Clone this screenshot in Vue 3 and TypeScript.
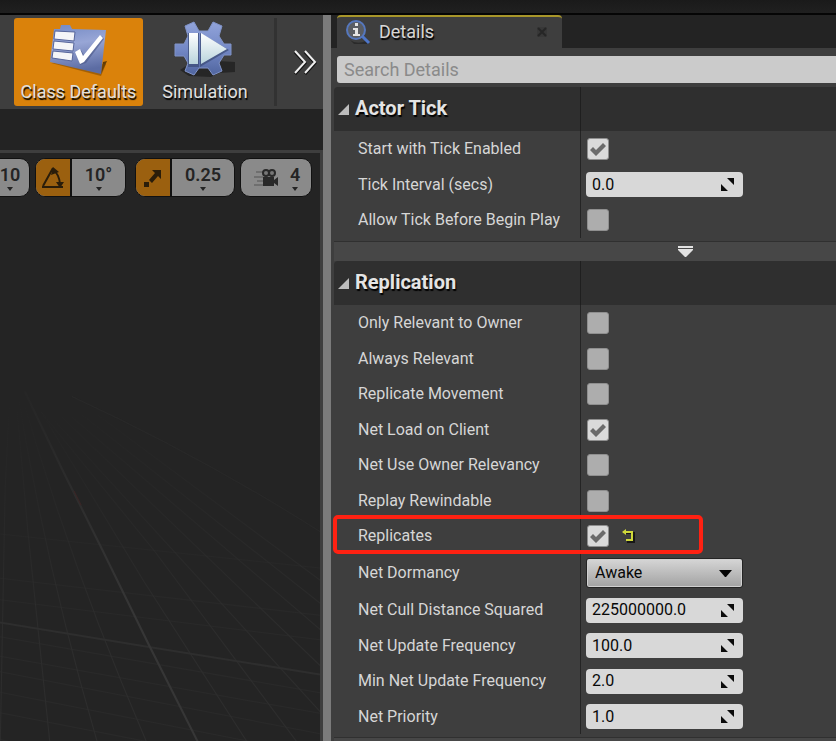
<script setup lang="ts">
import { reactive } from 'vue'

interface Property {
  id: string
  label: string
  kind: 'check' | 'number' | 'select'
  value: boolean | string
  marked?: boolean
}

interface Section {
  title: string
  properties: Property[]
}

const check = (id: string, label: string, value = false, marked = false): Property => ({ id, label, kind: 'check', value, marked })
const num = (id: string, label: string, value: string): Property => ({ id, label, kind: 'number', value })

const sections = reactive<Section[]>([
  {
    title: 'Actor Tick',
    properties: [
      check('start-tick', 'Start with Tick Enabled', true),
      num('tick-interval', 'Tick Interval (secs)', '0.0'),
      check('tick-before-play', 'Allow Tick Before Begin Play'),
    ],
  },
  {
    title: 'Replication',
    properties: [
      check('only-owner', 'Only Relevant to Owner'),
      check('always-relevant', 'Always Relevant'),
      check('replicate-movement', 'Replicate Movement'),
      check('net-load', 'Net Load on Client', true),
      check('owner-relevancy', 'Net Use Owner Relevancy'),
      check('replay-rewindable', 'Replay Rewindable'),
      check('replicates', 'Replicates', true, true),
      { id: 'net-dormancy', label: 'Net Dormancy', kind: 'select', value: 'Awake' },
      num('cull-distance', 'Net Cull Distance Squared', '225000000.0'),
      num('update-frequency', 'Net Update Frequency', '100.0'),
      num('min-update-frequency', 'Min Net Update Frequency', '2.0'),
      num('net-priority', 'Net Priority', '1.0'),
    ],
  },
])

const rays = [
  'M9 400 L5 480 L0 741', 'M15 385 L27 520 L50 741', 'M17 385 Q45 560 99 741', 'M20 385 Q70 560 149 741',
  'M40 405 L140 570 L250 741', 'M40 405 L150 540 L300 741', 'M50 410 L320 706', 'M60 410 L320 660',
  'M70 410 L320 624', 'M80 408 L320 598', 'M95 408 L320 575',
]
const cross = [
  'M0 524 L320 558', 'M0 567 L320 604', 'M0 588 L320 628',
  'M0 624 L320 680', 'M0 643 L320 700', 'M0 658 L320 720', 'M0 678 L320 741', 'M0 698 L220 741', 'M0 724 L75 741',
]
</script>

<template>
  <div class="editor">
    <div class="titlebar"></div>
    <div class="workspace">
      <main class="left">
        <div class="toolbar">
          <button class="tool active" type="button">
            <svg width="64" height="60" viewBox="0 0 64 60" aria-hidden="true">
              <defs>
                <linearGradient id="board" x1="0" y1="0" x2="0.2" y2="1">
                  <stop offset="0" stop-color="#7289c4" /><stop offset="0.45" stop-color="#98a6d6" /><stop offset="1" stop-color="#5c6ca3" />
                </linearGradient>
              </defs>
              <path d="M54 56 L60 43 L56 44 Z" fill="#4a2f06" opacity=".85" />
              <path d="M4 45 L54 58 L59 46 L50 46 Z" fill="#744604" opacity=".55" />
              <path d="M7 11 L13 11 L14 7 L23 7 L25 11 L59 12 L54 56 L3 44 Z" fill="url(#board)" />
              <path d="M8 13 L28 14 L27 23 L7 21 Z M7 23 L27 25 L26 33 L6 31 Z M6 33 L26 35 L25 43 L5 40 Z" fill="#f4f5f8" stroke="#56659a" stroke-width="1" />
              <path d="M30 34 L34 32 L38 39 L55 18 L57 21 L39 45 L33 47 Z" fill="#4a5787" opacity=".6" />
              <path d="M28 34 L33 31 L36 38 L53 17 L56 20 L37 44 L33 46 Z" fill="#fff" />
            </svg>
            <span>Class Defaults</span>
          </button>
          <button class="tool" type="button">
            <svg width="64" height="60" viewBox="0 0 64 60" aria-hidden="true">
              <defs>
                <linearGradient id="gear" x1="0" y1="0" x2="0" y2="1">
                  <stop offset="0" stop-color="#92a4da" /><stop offset="0.5" stop-color="#7489c6" /><stop offset="1" stop-color="#50659f" />
                </linearGradient>
                <linearGradient id="play" x1="0" y1="0" x2="0" y2="1">
                  <stop offset="0" stop-color="#fff" /><stop offset="1" stop-color="#b9d4dc" />
                </linearGradient>
              </defs>
              <path d="M7 52 L16 46 L45 43 L62 44 L62 54 L46 55 L38 59 L16 58 Z" fill="#202020" opacity=".8" />
              <path d="M21 4 L12 8 L15 18 L11 26 L2 26 L2 38 L11 38 L15 45 L12 53 L21 57 L26 50 L35 50 L40 57 L49 53 L46 45 L51 37 L58 37 L58 26 L51 26 L46 18 L49 8 L40 4 L35 13 L26 13 Z" fill="url(#gear)" stroke="#8093c7" stroke-width="1" stroke-linejoin="round" />
              <path d="M15 15 H26 V49 H15 Z M27 15 L56 32 L27 49 Z" fill="#40507d" opacity=".8" />
              <path d="M16 15 H25 V46 H16 Z M28 15 L54 31 L28 46 Z" fill="url(#play)" />
            </svg>
            <span>Simulation</span>
          </button>
          <button class="more" type="button" aria-label="More tools">
            <svg width="26" height="26" viewBox="0 0 26 26" aria-hidden="true">
              <path d="M3 3 L13 14 L3 25 M13 3 L23 14 L13 25" fill="none" stroke="#111" stroke-width="3" />
              <path d="M3 2 L13 13 L3 24 M13 2 L23 13 L13 24" fill="none" stroke="#eee" stroke-width="2" />
            </svg>
          </button>
        </div>
        <div class="gap-bar"></div>
        <div class="viewport">
          <svg class="floor" viewBox="0 153 320 588" preserveAspectRatio="xMinYMin slice" aria-hidden="true">
            <defs>
              <linearGradient id="fade" gradientUnits="userSpaceOnUse" x1="0" y1="390" x2="0" y2="640">
                <stop offset="0" stop-color="#2d2d2d" stop-opacity="0" /><stop offset="1" stop-color="#2d2d2d" />
              </linearGradient>
              <linearGradient id="axis" gradientUnits="userSpaceOnUse" x1="0" y1="390" x2="0" y2="600">
                <stop offset="0" stop-color="#363636" stop-opacity="0.1" /><stop offset="1" stop-color="#363636" />
              </linearGradient>
            </defs>
            <g fill="none" stroke="url(#fade)" stroke-width="1">
              <path v-for="d in rays" :key="d" :d="d" />
              <path v-for="d in cross" :key="d" :d="d" opacity=".6" />
            </g>
            <path d="M0 610 L145 634 L320 662" fill="none" stroke="#2e2e2e" stroke-width="2" />
            <path d="M70 390 Q200 450 320 527" fill="none" stroke="#292929" stroke-width="1" />
            <path d="M24 385 L62 464 L98 536 L145 632 L200 741" fill="none" stroke="url(#axis)" stroke-width="2" />
            <path d="M72 482 L79 496" stroke="#3b2626" stroke-width="1" />
          </svg>
          <div class="snap-bar">
            <div class="snap">
              <button class="value narrow" type="button"><span>10</span><i></i></button>
            </div>
            <div class="snap">
              <button class="toggle" type="button" aria-label="Rotation snapping">
                <svg width="24" height="24" viewBox="0 0 24 24" aria-hidden="true">
                  <path d="M1 21 H22 M2 20 L12 2 M13 5 Q18 8 19 18" fill="none" stroke="#2a1d0a" stroke-width="2" />
                  <path d="M10 9 L12 1 L18 6 Z M15 16 L23 16 L19 22 Z" fill="#2a1d0a" />
                </svg>
              </button>
              <button class="value" type="button"><span>10°</span><i></i></button>
            </div>
            <div class="snap spaced">
              <button class="toggle" type="button" aria-label="Scale snapping">
                <svg width="20" height="20" viewBox="0 0 20 20" aria-hidden="true">
                  <path d="M1 14 h5 v5 h-5 Z M9 2 H18 V11 L15 8 L9 15 L6 12 L12 5 Z" fill="#2a1d0a" />
                </svg>
              </button>
              <button class="value wide" type="button"><span>0.25</span><i></i></button>
            </div>
            <div class="snap">
              <button class="camera" type="button" aria-label="Camera speed 4">
                <svg width="26" height="20" viewBox="0 0 26 20" aria-hidden="true">
                  <path d="M3 4 H12 M1 9 H10 M4 13 H10 M1 17 H12" stroke="#555" stroke-width="1" />
                  <path d="M10 9 H21 V12 L25 9 V18 L21 15 V18 H10 Z" fill="#292929" />
                  <circle cx="13" cy="5" r="3" fill="#777" stroke="#292929" stroke-width="2" />
                  <circle cx="19" cy="5" r="3" fill="#777" stroke="#292929" stroke-width="2" />
                </svg>
                <span class="speed"><span>4</span><i></i></span>
              </button>
            </div>
          </div>
        </div>
      </main>
      <div class="splitter"></div>
      <aside class="details">
        <div class="tabs">
          <div class="tab">
            <svg width="26" height="26" viewBox="0 0 26 26" aria-hidden="true">
              <path d="M5 21 Q12 26 21 22 L24 25 H9 Z" fill="#222" opacity=".7" />
              <path d="M17 17 L24 24" stroke="#4e76c9" stroke-width="3" />
              <circle cx="11" cy="11" r="9" fill="#5a5d63" stroke="#5577bd" stroke-width="2" />
              <path d="M10 4 H13 V7 H10 Z M8 9 H13 V15 H15 V17 H8 V15 H10 V11 H8 Z" fill="#e4e4e4" />
            </svg>
            <span>Details</span>
            <button class="close" type="button" aria-label="Close Details">
              <svg width="10" height="10" viewBox="0 0 10 10" aria-hidden="true">
                <rect width="10" height="10" fill="#383838" />
                <path d="M1 1 L9 9 M9 1 L1 9" stroke="#262626" stroke-width="2" />
              </svg>
            </button>
          </div>
        </div>
        <input class="search" type="search" placeholder="Search Details" aria-label="Search Details" />
        <section v-for="section in sections" :key="section.title">
          <h2><svg width="12" height="12" viewBox="0 0 12 12" aria-hidden="true"><path d="M0 11 L11 0 V11 Z" fill="#bdbdbd" /></svg><span>{{ section.title }}</span></h2>
          <div class="rows">
            <div v-for="p in section.properties" :key="p.id" class="row" :class="p.kind">
              <label :for="p.id">{{ p.label }}</label>
              <div class="field">
                <span v-if="p.kind === 'check'" class="box">
                  <input :id="p.id" v-model="p.value" type="checkbox" />
                  <svg width="22" height="22" viewBox="0 0 22 22" aria-hidden="true"><path d="M3 12 L6 9 L9 12 L16 5 L19 8 L9 18 Z" fill="#6b6b6b" /></svg>
                </span>
                <button v-if="p.marked" class="reset" type="button" aria-label="Reset to default">
                  <svg width="13" height="14" viewBox="0 0 13 14" aria-hidden="true">
                    <path d="M2 4 H12 V13 H5" fill="none" stroke="#171717" stroke-width="2" />
                    <path d="M1 3 H10 V11 H4" fill="none" stroke="#cfd83a" stroke-width="2" />
                    <path d="M0 3 L4 0 V6 Z" fill="#cfd83a" />
                  </svg>
                </button>
                <span v-if="p.kind === 'number'" class="number-box">
                  <input :id="p.id" v-model="p.value" type="text" inputmode="decimal" />
                  <svg width="13" height="13" viewBox="0 0 13 13" aria-hidden="true"><path d="M6 0 H13 V7 Z M0 6 L7 13 H0 Z" fill="#0b0b0b" /></svg>
                </span>
                <span v-if="p.kind === 'select'" class="select-box">
                  <select :id="p.id" v-model="p.value"><option>Awake</option></select>
                  <svg width="13" height="7" viewBox="0 0 13 7" aria-hidden="true"><path d="M0 0 H13 L7 7 H6 Z" fill="#050505" /></svg>
                </span>
              </div>
              <span v-if="p.marked" class="marker"></span>
            </div>
          </div>
          <button class="advanced" type="button" aria-label="Show advanced properties">
            <svg width="15" height="12" viewBox="0 0 15 12" aria-hidden="true">
              <path d="M0 0 H15 V2 H0 Z M0 3 H15 V4 L8 11 H7 L0 4 Z" fill="#e2e2e2" />
            </svg>
          </button>
        </section>
      </aside>
    </div>
  </div>
</template>

<style>
body {
  background: #3e3e3e;
}
</style>

<style scoped>
* {
  box-sizing: border-box;
}
.editor {
  display: flex;
  flex-direction: column;
  height: 100vh;
  overflow: hidden;
  background: #3e3e3e;
  color: #d6d6d6;
  font: 16px/20px Roboto, "Liberation Sans", sans-serif;
}
button,
input,
select {
  margin: 0;
  padding: 0;
  border: 0;
  background: none;
  font: inherit;
  color: inherit;
}
svg {
  display: block;
  flex: none;
}
.titlebar {
  flex: none;
  height: 15px;
  background: linear-gradient(#1a1a1a, #202020);
  border-bottom: 2px solid #050505;
}
.workspace {
  flex: 1;
  display: grid;
  grid-template-columns: minmax(0, 323fr) 8px minmax(0, 505fr);
  min-height: 0;
}
.left {
  display: flex;
  flex-direction: column;
  min-width: 0;
  overflow: hidden;
}
.toolbar {
  display: flex;
  flex: none;
  height: 94px;
  padding: 3px 0 3px 14px;
}
.tool {
  display: flex;
  flex-direction: column;
  align-items: center;
  justify-content: space-between;
  width: 129px;
  padding-bottom: 3px;
  border-radius: 3px;
  font-size: 18px;
  line-height: 22px;
  color: #e0e0e0;
  text-shadow: 1px 2px 1px #000;
}
.tool.active {
  background: #da820b;
}
.tool + .tool {
  width: 124px;
}
.more {
  flex: 1;
  display: flex;
  align-items: center;
  justify-content: center;
  margin-left: 7px;
  padding-left: 10px;
  border-left: 3px solid #323232;
}
.gap-bar {
  flex: none;
  height: 44px;
  background: #232323;
  border-bottom: 3px solid #3e3e3e;
}
.viewport {
  position: relative;
  flex: 1;
  overflow: hidden;
  background: #242424;
  border-right: 3px solid #3e3e3e;
}
.floor {
  position: absolute;
  inset: 0;
  width: 100%;
  height: 100%;
}
.snap-bar {
  position: relative;
  display: flex;
  justify-content: flex-end;
  gap: 5px;
  padding: 5px 8px;
}
.snap {
  display: flex;
  flex: none;
  height: 39px;
  border: 1px solid #111;
  border-radius: 10px;
  overflow: hidden;
  background: #8a8a8a;
  color: #242424;
  font-size: 18px;
  font-weight: 600;
  line-height: 20px;
}
.snap.spaced {
  margin-left: 4px;
}
.toggle {
  display: flex;
  align-items: center;
  justify-content: center;
  width: 36px;
  background: #9b600f;
  border-right: 2px solid #111;
}
.value {
  display: flex;
  flex-direction: column;
  align-items: center;
  width: 53px;
  padding-top: 6px;
}
.value.wide {
  width: 62px;
}
.value.narrow {
  width: 38px;
}
.snap i {
  width: 0;
  border: 3px solid transparent;
  border-top: 4px solid #242424;
  border-bottom: 0;
  margin-top: 2px;
}
.camera {
  display: flex;
  align-items: center;
  gap: 11px;
  width: 70px;
  padding-left: 12px;
}
.speed {
  display: flex;
  flex-direction: column;
  align-items: center;
}
.splitter {
  background: #7b7b7b;
}
.details {
  display: flex;
  flex-direction: column;
  min-width: 0;
}
.tabs {
  flex: none;
  height: 33px;
  padding-left: 6px;
  background: #232323;
}
.tab {
  display: flex;
  align-items: center;
  gap: 8px;
  width: 225px;
  height: 33px;
  padding: 0 15px 2px 8px;
  background: #3e3e3e;
  border-top: 2px solid #a8962a;
  border-radius: 4px 4px 0 0;
  font-size: 18px;
  text-shadow: 1px 2px 1px #000;
}
.close {
  margin-left: auto;
}
.search {
  appearance: none;
  flex: none;
  height: 27px;
  margin: 8px 0 4px 6px;
  padding: 0 7px;
  border-radius: 3px 0 0 3px;
  background: #cbcbcb;
  color: #222;
  font-size: 18px;
  outline: none;
}
.search::placeholder {
  color: #8a8a8a;
}
section {
  flex: none;
  padding-left: 3px;
}
h2 {
  display: grid;
  grid-template-columns: 12px 1fr;
  align-items: center;
  gap: 5px;
  height: 44px;
  margin: 0;
  padding: 0 0 2px 4px;
  border-radius: 4px 0 0 0;
  background: linear-gradient(90deg, transparent 49%, #1f1f1f 49%, #1f1f1f calc(49% + 1px), transparent calc(49% + 1px)) #2f2f2f;
  color: #e4e4e4;
  font-size: 20px;
  font-weight: 700;
  line-height: 24px;
  text-shadow: 1px 2px 1px #000;
}
h2 svg {
  margin-top: 3px;
}
.row {
  position: relative;
  display: grid;
  grid-template-columns: 49% 1fr;
  align-items: center;
  height: 36px;
}
.row:nth-child(even) {
  height: 35px;
}
.row.select {
  height: 38px;
}
label {
  padding-left: 24px;
  white-space: nowrap;
}
.field {
  display: flex;
  align-items: center;
  height: 100%;
  padding-left: 5px;
  border-left: 1px solid #242424;
}
.box {
  display: grid;
  margin-left: 1px;
}
.box input,
.box svg {
  grid-area: 1 / 1;
}
.box input {
  appearance: none;
  width: 22px;
  height: 22px;
  border: 1px solid #8f8f8f;
  border-radius: 3px;
  background: #adadad;
}
.box input:checked {
  background: #dadada;
}
.box svg {
  visibility: hidden;
  pointer-events: none;
}
.box input:checked + svg {
  visibility: visible;
}
.reset {
  margin-left: 13px;
}
.number-box,
.select-box {
  display: grid;
  grid-template-columns: 1fr auto;
  align-items: center;
  color: #080808;
}
.number-box {
  width: 157px;
  height: 25px;
  padding: 0 9px 0 6px;
  border-radius: 4px;
  background: #d8d8d8;
}
.number-box input {
  width: 100%;
  outline: none;
}
.select-box {
  width: 157px;
  height: 30px;
}
.select-box select,
.select-box svg {
  grid-row: 1;
}
.select-box select {
  grid-column: 1 / 3;
  appearance: none;
  height: 30px;
  padding: 0 8px;
  border: 1px solid #242424;
  border-radius: 3px;
  background: linear-gradient(#d6d6d6, #a2a2a2);
  box-shadow: inset 0 0 0 1px #d0d0d0;
}
.select-box svg {
  grid-column: 2;
  margin-right: 11px;
  pointer-events: none;
}
.marker {
  position: absolute;
  left: -1px;
  top: -3px;
  width: 370px;
  height: 39px;
  border: 4px solid #ff2112;
  border-radius: 5px;
  pointer-events: none;
}
.advanced {
  display: flex;
  justify-content: center;
  width: 100%;
  height: 20px;
  margin-top: 3px;
  padding: 4px 0 0 200px;
  border-top: 1px solid #303030;
  background: #474747;
}
</style>
